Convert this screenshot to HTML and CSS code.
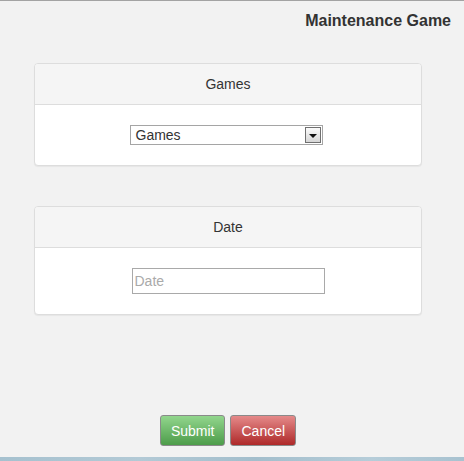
FILE: index.html
```html
<!DOCTYPE html>
<html>
<head>
<meta charset="utf-8">
<title>Maintenance Game</title>
<link rel="stylesheet" href="styles.css">
</head>
<body>
<div class="page">
  <h1 class="title">Maintenance Game</h1>
  <div class="content">
    <div class="panels">
      <section class="panel">
        <div class="panel-head">Games</div>
        <div class="panel-body">
          <div class="select">
            <span class="select-text">Games</span>
            <span class="select-btn"><span class="tri"></span></span>
          </div>
        </div>
      </section>
      <section class="panel">
        <div class="panel-head">Date</div>
        <div class="panel-body">
          <input class="input" type="text" placeholder="Date">
        </div>
      </section>
    </div>
    <div class="actions">
      <button class="btn btn-submit">Submit</button>
      <button class="btn btn-cancel">Cancel</button>
    </div>
  </div>
</div>
<div class="strip"></div>
</body>
</html>
```
FILE: styles.css
```css
html, body {
  margin: 0;
  padding: 0;
  background: #f2f2f2;
  font-family: "Liberation Sans", Arial, sans-serif;
}
.page {
  height: 457px;
  box-sizing: border-box;
  border-top: 1px solid #a3a3a3;
  background: #f2f2f2;
  display: flex;
  flex-direction: column;
}
.title {
  margin: 0;
  padding: 11px 13px 0 0;
  text-align: right;
  font-size: 16px;
  font-weight: bold;
  line-height: 18px;
  color: #333;
}
.content {
  flex: 1;
  margin: 33px 42px 0 34px;
  display: flex;
  flex-direction: column;
}
.panels {
  display: flex;
  flex-direction: column;
  gap: 40px;
}
.panel {
  background: #fff;
  border: 1px solid #dddddd;
  border-radius: 4px;
  box-shadow: 0 1px 1px rgba(0,0,0,0.05);
  overflow: hidden;
}
.panel-head {
  height: 40px;
  background: #f5f5f5;
  border-bottom: 1px solid #dddddd;
  display: flex;
  align-items: center;
  justify-content: center;
  font-size: 14px;
  color: #333;
}
.panel-body {
  padding: 20px 0;
  display: flex;
  justify-content: center;
}
.select {
  width: 193px;
  height: 20px;
  margin-right: 4px;
  box-sizing: border-box;
  border: 1px solid #a5a5a5;
  padding: 1px;
  display: flex;
  align-items: center;
  background: #fff;
}
.select-text {
  flex: 1;
  padding-left: 4px;
  font-size: 14px;
  color: #333;
  line-height: 16px;
}
.select-btn {
  width: 16px;
  height: 16px;
  box-sizing: border-box;
  border: 1px solid #707070;
  background: linear-gradient(#fbfbfb, #d6d6d6);
  display: flex;
  align-items: center;
  justify-content: center;
}
.tri {
  width: 0;
  height: 0;
  border-left: 4px solid transparent;
  border-right: 4px solid transparent;
  border-top: 4px solid #111;
  margin-top: 1px;
}
.input {
  width: 193px;
  height: 26px;
  margin-left: 0;
  box-sizing: border-box;
  border: 1px solid #a9a9a9;
  padding: 0 2px;
  font-family: "Liberation Sans", Arial, sans-serif;
  font-size: 14px;
  color: #333;
  background: #fff;
  outline: none;
}
.input::placeholder {
  color: #aaaaaa;
}
.actions {
  margin-top: auto;
  padding-bottom: 11px;
  display: flex;
  justify-content: center;
  gap: 5px;
}
.btn {
  height: 31px;
  padding: 0 10px;
  border: 1px solid #8a8a8a;
  border-radius: 3px;
  font-family: "Liberation Sans", Arial, sans-serif;
  font-size: 14px;
  color: #fff;
  cursor: pointer;
}
.btn-submit {
  background: linear-gradient(#92d68d, #4d9c4a);
}
.btn-cancel {
  background: linear-gradient(#e58a8a, #ae2929);
}
.strip {
  height: 4px;
  background: linear-gradient(to right, #a6c1cf, #b3cad6 30%, #a3becc 55%, #b6cdd9 80%, #a8c2d0);
}
```
